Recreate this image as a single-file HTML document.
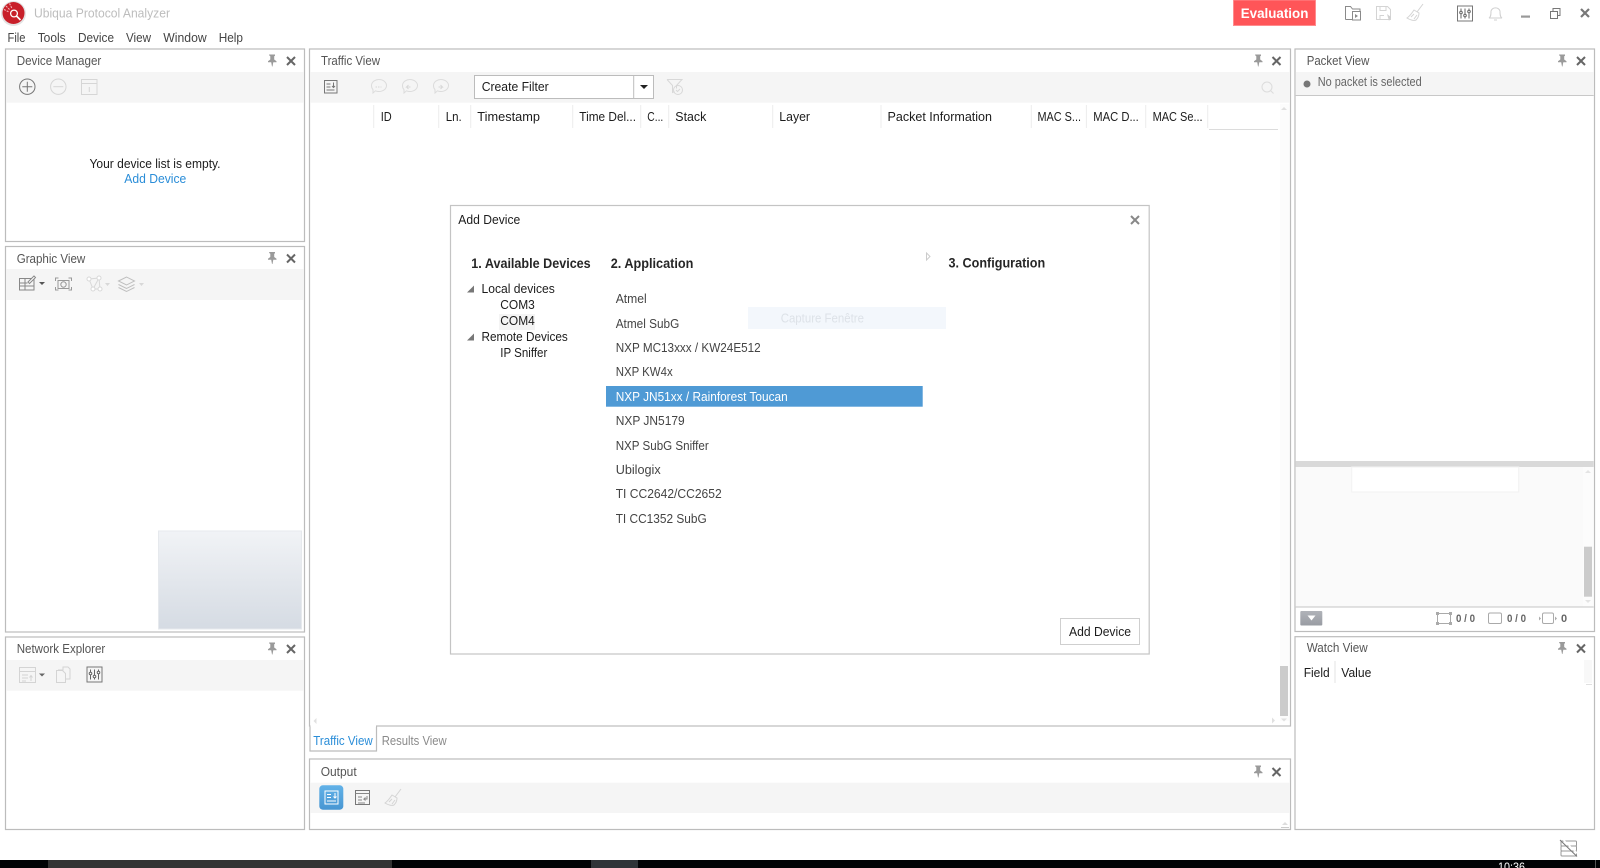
<!DOCTYPE html>
<html><head><meta charset="utf-8"><title>Ubiqua Protocol Analyzer</title>
<style>
html,body{margin:0;padding:0;background:#fff;width:1600px;height:868px;overflow:hidden}
svg{display:block}
text{font-family:"Liberation Sans",sans-serif;font-size:13px;fill:#222;white-space:pre}
.m{fill:#444}.h{fill:#555}.d{fill:#1c1c1c}.b{font-weight:bold;font-size:13.5px;fill:#262626}
.g{fill:none;stroke:#777;stroke-width:1}.f{fill:none;stroke:#d2d2d2;stroke-width:1}
</style></head><body>
<svg width="1600" height="868" viewBox="0 0 1600 868" xmlns="http://www.w3.org/2000/svg">
<defs>
<g id="pin"><path d="M-3,-6h6v1.2l-.8,.6v3.2l2.3,1.8v1h-3.2l-.8,4.2h-.5l-.8,-4.2h-3.2v-1l2.3,-1.8v-3.2l-.8,-.6z" fill="#9a9a9a"/></g>
<g id="x"><path d="M-4,-4L4,4M4,-4L-4,4" stroke="#666" stroke-width="2" fill="none"/></g>
<g id="tri"><path d="M4,-4V3H-3z" fill="#777"/></g>
<g id="broom"><path d="M7,-9L1,-1M-2,-3c-2,3,-4,6,-7,8c3,2,7,3,9,2c2,-2,3,-5,3,-7z M-5,4l3,-3M-2,6l3,-4" fill="none" stroke="#d4d4d4"/></g>
<g id="sliders"><rect x="-7.5" y="-7.5" width="15" height="15" fill="none" stroke="#777"/><path d="M-4,-5V5M0,-5V5M4,-5V5" stroke="#666"/><circle cx="-4" cy="-1" r="1.3" fill="#fff" stroke="#666"/><circle cx="0" cy="2" r="1.3" fill="#fff" stroke="#666"/><circle cx="4" cy="-2" r="1.3" fill="#fff" stroke="#666"/></g>
<g id="chat"><path d="M-7,-1a7.5,6,0,1,1,4,5.3l-2.5,2.2v-3.3a6,6,0,0,1,-1.5,-4.2z" fill="none" stroke="#dcdcdc"/></g>
</defs>

<!-- logo & title -->
<circle cx="13.5" cy="13.5" r="12.5" fill="#e3e3e3"/>
<circle cx="13.5" cy="13" r="11" fill="#c8202a"/>
<circle cx="14" cy="13.5" r="3.4" fill="none" stroke="#fff" stroke-width="1.3"/>
<path d="M16.500,16l4,4" stroke="#fff" stroke-width="1.600"/>
<path d="M4,9.500l5,2.500M6,6l4,4M9.500,3.500l2.500,5" stroke="#f4b0b4" stroke-width="1.100" stroke-dasharray="2 1"/>
<text x="34" y="17.500" textLength="136" lengthAdjust="spacingAndGlyphs" style="fill:#bdbdbd">Ubiqua Protocol Analyzer</text>

<!-- menu -->
<g class="m">
<text class="m" x="7.5" y="42" textLength="18" lengthAdjust="spacingAndGlyphs">File</text>
<text class="m" x="37.7" y="42" textLength="28" lengthAdjust="spacingAndGlyphs">Tools</text>
<text class="m" x="78" y="42" textLength="36" lengthAdjust="spacingAndGlyphs">Device</text>
<text class="m" x="126" y="42" textLength="25" lengthAdjust="spacingAndGlyphs">View</text>
<text class="m" x="163.3" y="42" textLength="43.4" lengthAdjust="spacingAndGlyphs">Window</text>
<text class="m" x="218.7" y="42" textLength="24.3" lengthAdjust="spacingAndGlyphs">Help</text>
</g>

<!-- top right -->
<rect x="1233.5" y="0" width="82" height="25.5" fill="#ff5558" stroke="#ff8c8e"/>
<text x="1240.7" y="18" textLength="67.7" lengthAdjust="spacingAndGlyphs" style="fill:#fff;font-weight:bold;font-size:14px">Evaluation</text>
<g transform="translate(1353,13)"><path d="M-7.5,6.5V-6.5h5l2,2.500h7.500v3M-7.5,6.500h7" fill="none" stroke="#8a8a8a"/><rect x="-.5" y="-1.500" width="8" height="8.500" fill="#fff" stroke="#8a8a8a"/><path d="M2,1l3,2l-3,2z" fill="#8a8a8a"/></g>
<g transform="translate(1384,13)"><path d="M-7.500,-6.500h11l3,3v10h-14z" fill="none" stroke="#d4d4d4"/><path d="M-4,-6.500v4h6v-4M-4,6.500v-4h4" fill="none" stroke="#d4d4d4"/><path d="M3,1l4,3l-2,4z" fill="#d0d0d0"/></g>
<use href="#broom" x="1416" y="13"/>
<use href="#sliders" x="1465" y="13.500"/>
<path d="M1489,18c2,-1,2,-4,2,-7a4.800,4.800,0,0,1,9,0c0,3,0,6,2,7zM1494,20h3" fill="none" stroke="#d0d0d0"/>
<rect x="1521" y="15.500" width="9" height="2.200" fill="#999"/>
<path d="M1550.500,11.500h7v7h-7zM1553,11.500v-3h7v7h-2.500" fill="none" stroke="#777"/>
<path d="M1581,9L1589,17M1589,9L1581,17" stroke="#777" stroke-width="2.200"/>

<!-- ============ panels ============ -->
<g fill="#fff" stroke="#bcbcbc" stroke-width="1.200">
<rect x="5.500" y="49" width="299" height="192.500"/>
<rect x="5.500" y="246.500" width="299" height="385.500"/>
<rect x="5.500" y="637" width="299" height="192.500"/>
<rect x="309.500" y="49" width="981" height="677"/>
<rect x="309.500" y="759" width="981" height="70.500"/>
<rect x="1295" y="49" width="299.500" height="582.500"/>
<rect x="1295" y="636.700" width="299.500" height="192.800"/>
</g>

<!-- Device Manager -->
<text class="h" x="16.700" y="65" textLength="84.600" lengthAdjust="spacingAndGlyphs">Device Manager</text>
<use href="#pin" x="272" y="60.500"/><use href="#x" x="291" y="61"/>
<rect x="6.200" y="72" width="297.600" height="30.700" fill="#f5f5f5"/>
<g transform="translate(27.300,86.700)"><circle r="7.700" fill="none" stroke="#777"/><path d="M-5,0H5M0,-5V5" stroke="#777"/></g>
<g transform="translate(58.300,86.700)"><circle r="7.700" fill="none" stroke="#d6d6d6"/><path d="M-5,0H5" stroke="#d6d6d6"/></g>
<g fill="none" stroke="#d6d6d6"><rect x="81.500" y="79.500" width="15.500" height="15"/><path d="M81.500,83.500h15.500M89.300,87v5"/></g>
<text class="d" x="89.500" y="168" textLength="131" lengthAdjust="spacingAndGlyphs">Your device list is empty.</text>
<text x="124.300" y="183" textLength="62" lengthAdjust="spacingAndGlyphs" style="fill:#2a8dd8">Add Device</text>

<!-- Graphic View -->
<text class="h" x="16.700" y="263" textLength="68.600" lengthAdjust="spacingAndGlyphs">Graphic View</text>
<use href="#pin" x="272" y="258"/><use href="#x" x="291" y="258.500"/>
<rect x="6.200" y="269" width="297.600" height="31" fill="#f5f5f5"/>
<g transform="translate(27,284)"><rect x="-7.500" y="-5.500" width="14.500" height="11.500" fill="none" stroke="#888"/><path d="M-7.500,-1h8M-2,-5.500V6M-7.500,2H7" stroke="#888" fill="none"/><path d="M1,-2L7,-8l1.500,1.500L2.500,-.5z" fill="#fff" stroke="#888"/></g>
<path d="M39,282h6l-3,3z" fill="#555"/>
<g transform="translate(63.500,284)" fill="none" stroke="#999"><path d="M-8,-3v-3h3M5,-6h3v3M8,3v3h-3M-5,6h-3v-3"/><rect x="-5.500" y="-3.500" width="11" height="8"/><circle r="2.700" cy=".5"/></g>
<g transform="translate(94,284)" fill="none" stroke="#d8d8d8"><path d="M-5,-5L5,-6L-1,5L6,5M-5,-5L-1,5M5,-6L6,5"/><circle cx="-5" cy="-5" r="2" fill="#fff"/><circle cx="5" cy="-6" r="2" fill="#fff"/><circle cx="-1" cy="5" r="2" fill="#fff"/><circle cx="6" cy="5" r="2" fill="#fff"/></g>
<path d="M105,283h5l-2.500,3z" fill="#d8d8d8"/>
<g transform="translate(126.500,284)" fill="none" stroke="#bfbfbf"><path d="M-8,-3L0,-7L8,-3L0,1z"/><path d="M-8,0.500L0,4.500L8,.5M-8,3.500L0,7.500L8,3.500"/></g>
<path d="M139,283h5l-2.500,3z" fill="#d8d8d8"/>
<defs><linearGradient id="th" x1="0" y1="0" x2="0" y2="1"><stop offset="0" stop-color="#f1f3f6"/><stop offset="1" stop-color="#d5dbe3"/></linearGradient>
<linearGradient id="bl" x1="0" y1="0" x2="0" y2="1"><stop offset="0" stop-color="#62b2e8"/><stop offset="1" stop-color="#4896d2"/></linearGradient>
<linearGradient id="gb" x1="0" y1="0" x2="0" y2="1"><stop offset="0" stop-color="#b0b3b9"/><stop offset="1" stop-color="#999ca3"/></linearGradient></defs>
<rect x="158.500" y="531" width="143" height="98" fill="url(#th)" stroke="#e6e9ed"/>

<!-- Network Explorer -->
<text class="h" x="16.700" y="653" textLength="88.600" lengthAdjust="spacingAndGlyphs">Network Explorer</text>
<use href="#pin" x="272" y="648.500"/><use href="#x" x="291" y="649"/>
<rect x="6.200" y="660" width="297.600" height="30.700" fill="#f5f5f5"/>
<g fill="none" stroke="#d4d4d4"><rect x="19.500" y="667.500" width="16" height="15"/><path d="M19.500,671.500h16M22,675h6M22,678h6M22,681h4M31,681v-5M29.500,677.500l1.500,-2l1.500,2"/></g>
<path d="M39,673.500h6l-3,3z" fill="#666"/>
<g fill="none" stroke="#d4d4d4"><path d="M58,670h5v-3h5l2,2v10h-4"/><path d="M56.500,670.500h6l3,3v9h-9z" fill="#f5f5f5"/></g>
<use href="#sliders" x="94.500" y="674.500"/>

<!-- Traffic View -->
<text class="h" x="321" y="65" textLength="59" lengthAdjust="spacingAndGlyphs">Traffic View</text>
<use href="#pin" x="1258" y="60.500"/><use href="#x" x="1276.500" y="61"/>
<rect x="310.200" y="72" width="979.800" height="30.700" fill="#f5f5f5"/>
<g fill="none" stroke="#777"><rect x="324.500" y="80.500" width="12.500" height="12.500"/><path d="M326.500,84h4M326.500,87h4M326.500,90h8M333.500,82.500v5M332,86l1.500,1.500l1.500,-1.500"/></g>
<use href="#chat" x="378.500" y="86.500"/><use href="#chat" x="409.500" y="86.500"/><use href="#chat" x="440.500" y="86.500"/>
<path d="M375.500,87h6" stroke="#d8d8d8" stroke-dasharray="1.500 1"/>
<path d="M410.500,87h-4l2,-2m-2,2l2,2" fill="none" stroke="#d8d8d8"/>
<path d="M438.500,87h4l-2,-2m2,2l-2,2" fill="none" stroke="#d8d8d8"/>
<rect x="474.500" y="75.500" width="179" height="23" fill="#fff" stroke="#bcbcbc"/>
<path d="M633.700,75.500v23" stroke="#bcbcbc"/>
<path d="M640,85h8l-4,4z" fill="#222"/>
<text class="d" x="481.700" y="91" textLength="67" lengthAdjust="spacingAndGlyphs">Create Filter</text>
<g fill="none" stroke="#d8d8d8"><path d="M667,79.500h15l-5.500,6v3"/><path d="M667,79.500l5.500,6v7l2,-1"/><circle cx="678" cy="90" r="4.500"/><path d="M676,90l1.500,1.500l2.500,-2.500"/></g>
<g fill="none" stroke="#dcdcdc"><circle cx="1267" cy="87" r="5"/><path d="M1270.500,90.500l3,3"/></g>

<!-- column headers -->
<g stroke="#ececec"><path d="M373.700,105v23M438.700,105v23M470.700,105v23M572.700,105v23M640.700,105v23M668.700,105v23M772.700,105v23M881,105v23M1031.300,105v23M1086.400,105v23M1145.700,105v23M1207.700,105v23"/></g>
<path d="M1209,129.500h69" stroke="#dcdcdc"/>
<g class="d">
<text class="d" x="380.700" y="121" textLength="11" lengthAdjust="spacingAndGlyphs">ID</text>
<text class="d" x="445.700" y="121" textLength="16" lengthAdjust="spacingAndGlyphs">Ln.</text>
<text class="d" x="477.300" y="121" textLength="62.700" lengthAdjust="spacingAndGlyphs">Timestamp</text>
<text class="d" x="579.300" y="121" textLength="56.700" lengthAdjust="spacingAndGlyphs">Time Del...</text>
<text class="d" x="647.300" y="121" textLength="16" lengthAdjust="spacingAndGlyphs">C...</text>
<text class="d" x="675.300" y="121" textLength="31" lengthAdjust="spacingAndGlyphs">Stack</text>
<text class="d" x="779.300" y="121" textLength="30.700" lengthAdjust="spacingAndGlyphs">Layer</text>
<text class="d" x="887.500" y="121" textLength="104.500" lengthAdjust="spacingAndGlyphs">Packet Information</text>
<text class="d" x="1037.500" y="121" textLength="43.500" lengthAdjust="spacingAndGlyphs">MAC S...</text>
<text class="d" x="1093.300" y="121" textLength="45.500" lengthAdjust="spacingAndGlyphs">MAC D...</text>
<text class="d" x="1152.600" y="121" textLength="50" lengthAdjust="spacingAndGlyphs">MAC Se...</text>
</g>
<rect x="1280" y="104" width="9.500" height="617" fill="#fcfcfc"/>
<path d="M1281,110h6l-3,-3z" fill="#e0e0e0"/>
<rect x="1280" y="666" width="8" height="50" fill="#cbcbcb"/>
<path d="M1281,718.500h6l-3,3z" fill="#e0e0e0"/>
<path d="M1272,717.500v6l3,-3z" fill="#e0e0e0"/>
<path d="M316.500,718v6l-3,-3z" fill="#e0e0e0"/>

<!-- tabs -->
<path d="M310,726V751H376.500V726" fill="#fff" stroke="#bcbcbc" stroke-width="1.200"/>
<path d="M310.500,726H376" stroke="#fff" stroke-width="2"/>
<text x="313.300" y="745" textLength="59.400" lengthAdjust="spacingAndGlyphs" style="fill:#2a8dd8">Traffic View</text>
<text x="381.700" y="745" textLength="65" lengthAdjust="spacingAndGlyphs" style="fill:#8a8a8a">Results View</text>

<!-- Output -->
<text class="h" x="320.700" y="776" textLength="36" lengthAdjust="spacingAndGlyphs">Output</text>
<use href="#pin" x="1258" y="771.500"/><use href="#x" x="1276.500" y="772"/>
<rect x="310.200" y="782.700" width="979.800" height="30.300" fill="#f5f5f5"/>
<rect x="319.300" y="785.300" width="24" height="24.400" rx="3.500" fill="url(#bl)"/>
<g fill="none" stroke="#fff"><rect x="325" y="791" width="13" height="13"/><path d="M327,794.500h4M327,797.500h4M327,801h9M335,793v5M333.500,796.500l1.500,1.500l1.500,-1.500"/></g>
<g fill="none" stroke="#777"><rect x="355.500" y="790.500" width="14" height="14"/><path d="M355.500,793.500h14M358,797h4M358,800h4M358,803h7M367,796v3h-3l1.500,-1.500m-1.500,1.500l1.500,1.500" stroke="#888"/></g>
<use href="#broom" x="394" y="798"/>
<path d="M1282,825h6l-3,-3z" fill="#ddd"/>
<path d="M1281,827.500h8" stroke="#ccc"/>

<!-- Packet View -->
<text class="h" x="1306.700" y="65" textLength="62.700" lengthAdjust="spacingAndGlyphs">Packet View</text>
<use href="#pin" x="1562" y="60.500"/><use href="#x" x="1581" y="61"/>
<rect x="1295.700" y="72" width="298" height="23" fill="#f5f5f5"/>
<path d="M1295.700,95.500h298" stroke="#c8c8c8"/>
<circle cx="1307" cy="84" r="3.500" fill="#777"/>
<text x="1317.700" y="86" textLength="104" lengthAdjust="spacingAndGlyphs" style="fill:#666;font-size:12.500px">No packet is selected</text>
<rect x="1295.700" y="461" width="298" height="6" fill="#d9d9d9"/>
<rect x="1295.700" y="467" width="298" height="140" fill="#fafafa"/>
<rect x="1351.700" y="467" width="167" height="25" fill="#fff" stroke="#f2f2f2"/>
<rect x="1583" y="467" width="10" height="140" fill="#fcfcfc"/>
<path d="M1585,473h6l-3,-3z" fill="#e4e4e4"/>
<rect x="1584" y="546.700" width="8" height="50" fill="#cbcbcb"/>
<path d="M1585,600h6l-3,3z" fill="#e4e4e4"/>
<path d="M1295.700,607h298" stroke="#c4c4c4"/>
<rect x="1300.300" y="611" width="22" height="14.500" rx="1" fill="url(#gb)"/>
<path d="M1307.500,615.500h8l-4,5z" fill="#fff"/>
<g fill="none" stroke="#aaa"><rect x="1437.500" y="613.500" width="13" height="10"/></g>
<g fill="#aaa"><rect x="1436" y="612" width="3" height="3"/><rect x="1449" y="612" width="3" height="3"/><rect x="1436" y="622" width="3" height="3"/><rect x="1449" y="622" width="3" height="3"/></g>
<rect x="1488.500" y="613" width="13" height="10.500" rx="1.500" fill="none" stroke="#aaa"/>
<g fill="none" stroke="#aaa"><rect x="1542.500" y="613" width="11" height="10.500" rx="1.500"/></g>
<path d="M1539,616.500l2,2l-2,2zM1555,616.500l2,2l-2,2z" fill="#aaa"/>
<text x="1456" y="622" textLength="19" lengthAdjust="spacingAndGlyphs" style="fill:#666;font-size:11px;font-weight:bold">0 / 0</text>
<text x="1507" y="622" textLength="19" lengthAdjust="spacingAndGlyphs" style="fill:#666;font-size:11px;font-weight:bold">0 / 0</text>
<text x="1561" y="622" style="fill:#666;font-size:11px;font-weight:bold">0</text>

<!-- Watch View -->
<text class="h" x="1306.700" y="652" textLength="61" lengthAdjust="spacingAndGlyphs">Watch View</text>
<use href="#pin" x="1562" y="648"/><use href="#x" x="1581" y="648.500"/>
<path d="M1335,661v22" stroke="#ececec" stroke-width="1.500"/>
<text class="d" x="1303.700" y="677" textLength="26" lengthAdjust="spacingAndGlyphs">Field</text>
<text class="d" x="1341.300" y="677" textLength="30" lengthAdjust="spacingAndGlyphs">Value</text>
<rect x="1584" y="660" width="8" height="23" fill="#f8f8f8"/>
<path d="M1586,684.500h6" stroke="#e0e0e0"/>

<!-- status icon -->
<g fill="none" stroke="#999"><rect x="1561" y="841" width="15.500" height="5" rx="1"/><rect x="1561" y="846" width="15.500" height="5" rx="1"/><rect x="1561" y="851" width="15.500" height="5" rx="1"/></g>
<path d="M1563,839.500L1578,854" stroke="#fff" stroke-width="1.500"/>
<path d="M1560,840L1577,856.500" stroke="#777"/>

<!-- Dialog -->
<rect x="450.500" y="205.500" width="698.700" height="448.500" fill="#fff" stroke="#c4c4c4" stroke-width="1.200"/>
<text class="d" x="458.300" y="224" textLength="62" lengthAdjust="spacingAndGlyphs">Add Device</text>
<path d="M1131,216L1139,224M1139,216L1131,224" stroke="#888" stroke-width="2"/>
<text class="b" x="471.300" y="268" textLength="119.400" lengthAdjust="spacingAndGlyphs">1. Available Devices</text>
<text class="b" x="610.700" y="268" textLength="82.700" lengthAdjust="spacingAndGlyphs">2. Application</text>
<text class="b" x="948.500" y="267.500" textLength="96.700" lengthAdjust="spacingAndGlyphs">3. Configuration</text>
<path d="M926.500,253l3.500,3.500l-3.500,3.500z" fill="#fff" stroke="#ccc"/>
<use href="#tri" x="470" y="289.500"/>
<use href="#tri" x="470" y="337.500"/>
<rect x="499" y="314" width="36" height="16" fill="#f4f4f4"/>
<text class="d" x="481.500" y="293" textLength="73.300" lengthAdjust="spacingAndGlyphs">Local devices</text>
<text class="d" x="500.300" y="309" textLength="34.500" lengthAdjust="spacingAndGlyphs">COM3</text>
<text class="d" x="500.300" y="325" textLength="34.500" lengthAdjust="spacingAndGlyphs">COM4</text>
<text class="d" x="481.500" y="341" textLength="86.300" lengthAdjust="spacingAndGlyphs">Remote Devices</text>
<text class="d" x="500.300" y="357" textLength="47" lengthAdjust="spacingAndGlyphs">IP Sniffer</text>
<rect x="748" y="307" width="198" height="22" fill="#f3f7fc"/>
<text x="780.700" y="322.500" textLength="83.300" lengthAdjust="spacingAndGlyphs" style="fill:#dde2e8;font-size:12.500px">Capture Fenêtre</text>
<rect x="606" y="386" width="316.700" height="20.700" fill="#4f9ad5"/>
<g class="h">
<text style="fill:#444" x="615.700" y="303" textLength="31" lengthAdjust="spacingAndGlyphs">Atmel</text>
<text style="fill:#444" x="615.700" y="328" textLength="63.600" lengthAdjust="spacingAndGlyphs">Atmel SubG</text>
<text style="fill:#444" x="615.700" y="352" textLength="145" lengthAdjust="spacingAndGlyphs">NXP MC13xxx / KW24E512</text>
<text style="fill:#444" x="615.700" y="376" textLength="57" lengthAdjust="spacingAndGlyphs">NXP KW4x</text>
<text style="fill:#fff" x="615.700" y="401" textLength="172" lengthAdjust="spacingAndGlyphs">NXP JN51xx / Rainforest Toucan</text>
<text style="fill:#444" x="615.700" y="425" textLength="69" lengthAdjust="spacingAndGlyphs">NXP JN5179</text>
<text style="fill:#444" x="615.700" y="450" textLength="93" lengthAdjust="spacingAndGlyphs">NXP SubG Sniffer</text>
<text style="fill:#444" x="615.700" y="474" textLength="45" lengthAdjust="spacingAndGlyphs">Ubilogix</text>
<text style="fill:#444" x="615.700" y="498" textLength="106" lengthAdjust="spacingAndGlyphs">TI CC2642/CC2652</text>
<text style="fill:#444" x="615.700" y="523" textLength="91" lengthAdjust="spacingAndGlyphs">TI CC1352 SubG</text>
</g>
<rect x="1060.500" y="618.500" width="79" height="26" fill="#fff" stroke="#cfcfcf"/>
<text class="d" x="1069" y="636" textLength="62" lengthAdjust="spacingAndGlyphs">Add Device</text>

<!-- taskbar -->
<rect x="0" y="860" width="1600" height="8" fill="#010305"/>
<rect x="48" y="860" width="344" height="8" fill="#333"/>
<rect x="591" y="860" width="47" height="8" fill="#2f3438"/>
<text x="1498" y="871" textLength="27" lengthAdjust="spacingAndGlyphs" style="fill:#fff;font-size:12px">10:36</text>
<path d="M1595.500,860v8" stroke="#555"/>
</svg>
</body></html>
